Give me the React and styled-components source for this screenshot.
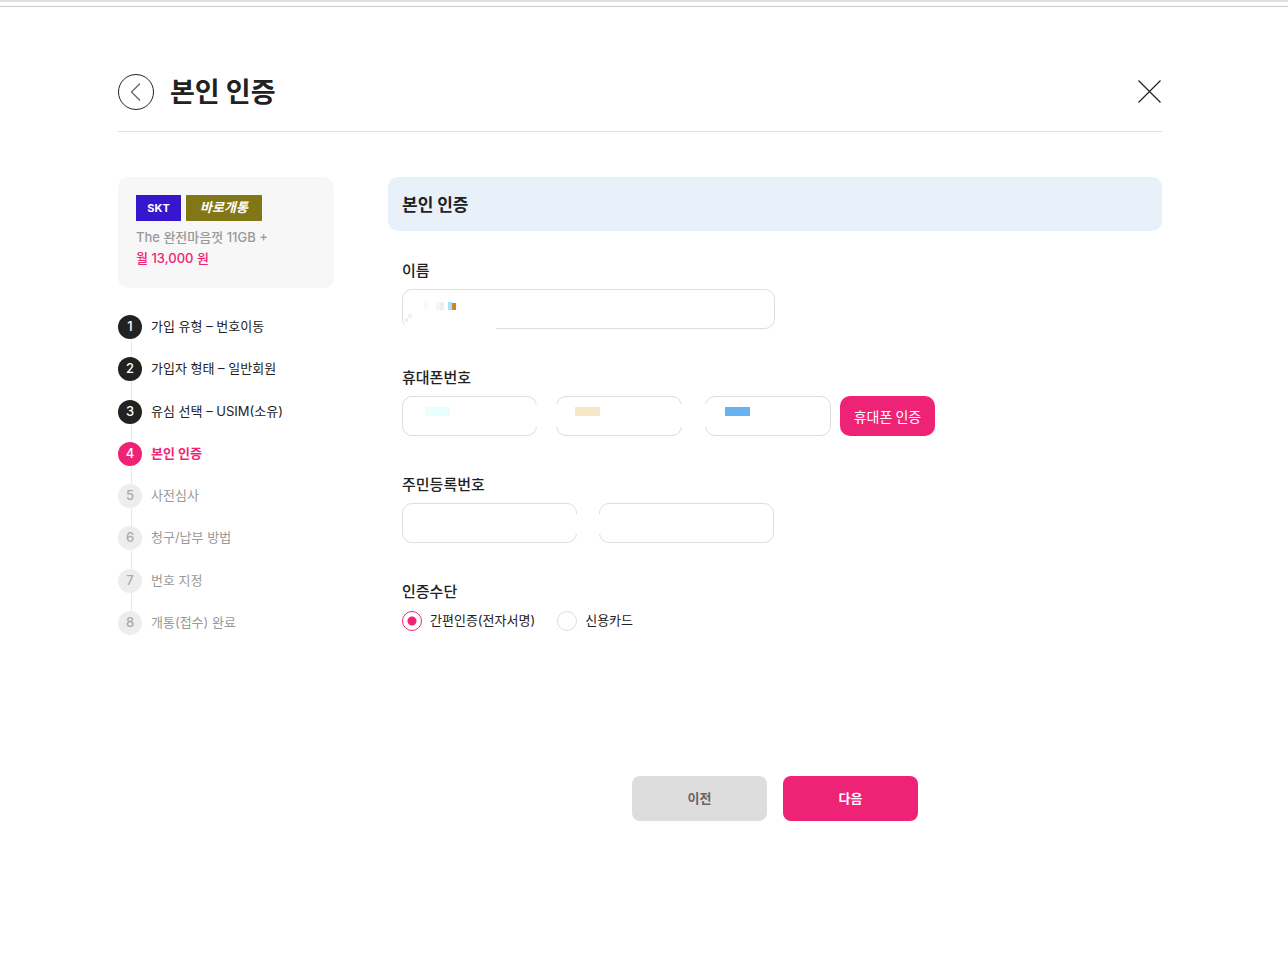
import React from "react";
import styled, { createGlobalStyle } from "styled-components";

const GlobalStyle = createGlobalStyle`
  *, *::before, *::after { box-sizing: border-box; }
  body {
    margin: 0;
    background: #fff;
    color: #222;
    font-family: Inter, "Noto Sans CJK KR", sans-serif;
    font-size: 13px;
    line-height: 20px;
  }
  h1, h2, p, ol, fieldset, legend { margin: 0; padding: 0; border: 0; }
  ol { list-style: none; }
  button, input { font: inherit; }
  button { border: 0; padding: 0; background: none; cursor: pointer; }
`;

const TopRule = styled.div`
  height: 7px;
  border-top: 2px solid #e0e0e0;
  border-bottom: 1px solid #ccc;
`;

const Page = styled.div`
  padding: 67px 126px 80px 118px;
`;

const Header = styled.header`
  display: flex;
  align-items: center;
  gap: 16px;
  padding-bottom: 21px;
  border-bottom: 1px solid #ddd;
`;

const IconButton = styled.button`
  display: flex;
  svg { display: block; }
`;

const Title = styled.h1`
  flex: 1;
  padding-bottom: 2px;
  font-family: "Noto Sans CJK KR", sans-serif;
  font-size: 27px;
  font-weight: 700;
  line-height: 34px;
`;

const Columns = styled.div`
  display: flex;
  align-items: flex-start;
  gap: 54px;
  padding-top: 45px;
`;

const Sidebar = styled.aside`
  flex: 0 0 216px;
`;

const PlanCard = styled.section`
  padding: 18px 18px 19px;
  border-radius: 10px;
  background: #f7f7f7;
`;

const Tags = styled.div`
  display: flex;
  gap: 5px;
  margin-bottom: 6px;
`;

const Tag = styled.span`
  width: ${(p) => p.$width};
  height: 26px;
  background: ${(p) => p.$color};
  color: #fff;
  font-size: ${(p) => (p.$slanted ? "13px" : "11px")};
  font-style: ${(p) => (p.$slanted ? "italic" : "normal")};
  font-weight: 700;
  line-height: ${(p) => (p.$slanted ? "24px" : "26px")};
  text-align: center;
`;

const PlanText = styled.p`
  color: ${(p) => (p.$accent ? "#ef2375" : "#999")};
  font-weight: 500;
  font-size: 13px;
  line-height: 21px;
`;

const StepList = styled.ol`
  position: relative;
  display: flex;
  flex-direction: column;
  justify-content: space-between;
  height: 320px;
  margin-top: 27px;
  &::before {
    content: "";
    position: absolute;
    z-index: -1;
    top: 12px;
    bottom: 12px;
    left: 13px;
    width: 1px;
    background: #e8e8e8;
  }
`;

const stepColors = {
  done: { bg: "#222", number: "#fff", text: "#222" },
  current: { bg: "#ef2375", number: "#fff", text: "#ef2375" },
  todo: { bg: "#ededed", number: "#aaa", text: "#999" },
};

const Step = styled.li`
  display: flex;
  align-items: flex-start;
  gap: 9px;
  line-height: 22px;
  color: ${(p) => stepColors[p.$state].text};
  font-weight: ${(p) => (p.$state === "current" ? 700 : 400)};
`;

const StepNumber = styled.span`
  width: 24px;
  height: 24px;
  border-radius: 50%;
  background: ${(p) => stepColors[p.$state].bg};
  color: ${(p) => stepColors[p.$state].number};
  font-size: 13px;
  font-weight: 500;
  text-align: center;
`;

const Main = styled.main`
  flex: 1;
  min-width: 0;
`;

const Banner = styled.h2`
  padding: 0 14px;
  border-radius: 10px;
  background: #e8f0fa;
  font-family: "Noto Sans CJK KR", sans-serif;
  font-size: 17px;
  font-weight: 700;
  line-height: 54px;
`;

const Form = styled.form`
  padding-top: 27px;
`;

const Fields = styled.div`
  display: flex;
  flex-direction: column;
  gap: 36px;
  padding: 0 14px;
`;

const Field = styled.fieldset`
  min-width: 0;
`;

const labelText = `
  display: block;
  margin-bottom: 7px;
  font-size: 15px;
  font-weight: 500;
  line-height: 24px;
  font-family: "Noto Sans CJK KR", sans-serif;
`;
const Label = styled.label`${labelText}`;
const Legend = styled.legend`${labelText}`;

const Row = styled.div`
  display: flex;
`;

const Gap = styled.span`
  flex: 0 0 ${(p) => p.$width};
`;

const InputBox = styled.div`
  position: relative;
  flex: 0 0 ${(p) => p.$width};
  width: ${(p) => p.$width};
  height: 40px;
  &::before, &::after {
    position: absolute;
    top: ${(p) => p.$cutTop || "8px"};
    width: 3px;
    height: ${(p) => p.$cutHeight || "23px"};
    background: #fff;
  }
  &::before { content: ${(p) => (p.$openLeft ? '""' : "none")}; left: 0; }
  &::after { content: ${(p) => (p.$openRight ? '""' : "none")}; right: 0; }
`;

const Input = styled.input`
  display: block;
  width: 100%;
  height: 40px;
  padding: 0 14px;
  border: 1px solid #ddd;
  border-radius: 10px;
  background: #fff;
  outline: none;
`;

const Patch = styled.span`
  position: absolute;
  left: ${(p) => p.$x}px;
  top: ${(p) => p.$y}px;
  width: ${(p) => p.$w}px;
  height: ${(p) => p.$h}px;
  background: ${(p) => p.$color};
  pointer-events: none;
`;

const VerifyButton = styled.button`
  width: 95px;
  height: 40px;
  border-radius: 10px;
  background: #ef2375;
  color: #fff;
  font-family: "Noto Sans CJK KR", sans-serif;
  font-size: 14px;
`;

const RadioRow = styled.div`
  display: flex;
  gap: 22px;
  padding-top: 1px;
`;

const RadioLabel = styled.label`
  display: flex;
  gap: 8px;
  line-height: 18px;
`;

const Radio = styled.input`
  appearance: none;
  width: 20px;
  height: 20px;
  margin: 0;
  border: 1px solid #ddd;
  border-radius: 50%;
  &:checked {
    border-color: #ef2375;
    background: radial-gradient(circle, #ef2375 4px, #fff 5px);
  }
`;

const Actions = styled.div`
  display: flex;
  justify-content: center;
  gap: 16px;
  margin-top: 145px;
`;

const ActionButton = styled.button`
  width: 135px;
  height: 45px;
  padding-bottom: 2px;
  border-radius: 8px;
  background: ${(p) => (p.$primary ? "#ef2375" : "#ddd")};
  color: ${(p) => (p.$primary ? "#fff" : "#666")};
  font-weight: 700;
`;

const steps = [
  ["가입 유형 – 번호이동", "done"],
  ["가입자 형태 – 일반회원", "done"],
  ["유심 선택 – USIM(소유)", "done"],
  ["본인 인증", "current"],
  ["사전심사", "todo"],
  ["청구/납부 방법", "todo"],
  ["번호 지정", "todo"],
  ["개통(접수) 완료", "todo"],
];

export default function App() {
  return (
    <>
      <GlobalStyle />
      <TopRule />
      <Page>
        <Header>
          <IconButton type="button" aria-label="뒤로">
            <svg width="36" height="36" viewBox="0 0 36 36" fill="none">
              <circle cx="18" cy="18" r="17.5" stroke="#222" />
              <path d="M22 9.5 L13.5 18 L22 26.5" stroke="#666" strokeWidth="1.3" />
            </svg>
          </IconButton>
          <Title>본인 인증</Title>
          <IconButton type="button" aria-label="닫기">
            <svg width="25" height="24" viewBox="0 0 25 24" fill="none">
              <path d="M1.5 0.5 L23.5 22.5 M23.5 0.5 L1.5 22.5" stroke="#222" strokeWidth="1.2" />
            </svg>
          </IconButton>
        </Header>
        <Columns>
          <Sidebar>
            <PlanCard>
              <Tags>
                <Tag $width="45px" $color="#3617ce">SKT</Tag>
                <Tag $width="76px" $color="#827717" $slanted>바로개통</Tag>
              </Tags>
              <PlanText>The 완전마음껏 11GB +</PlanText>
              <PlanText $accent>월 13,000 원</PlanText>
            </PlanCard>
            <StepList>
              {steps.map(([text, state], i) => (
                <Step key={text} $state={state} aria-current={state === "current" ? "step" : undefined}>
                  <StepNumber $state={state}>{i + 1}</StepNumber>
                  <span>{text}</span>
                </Step>
              ))}
            </StepList>
          </Sidebar>
          <Main>
            <Banner>본인 인증</Banner>
            <Form onSubmit={(e) => e.preventDefault()}>
              <Fields>
                <Field>
                  <Label htmlFor="name">이름</Label>
                  <InputBox $width="373px">
                    <Input id="name" type="text" />
                    <Patch $x={2} $y={36} $w={92} $h={4} $color="#fff" />
                    <Patch $x={3} $y={29} $w={3} $h={4} $color="#eee" />
                    <Patch $x={6} $y={25} $w={4} $h={4} $color="#f1f1f1" />
                    <Patch $x={22} $y={13} $w={4} $h={8} $color="#f8faff" />
                    <Patch $x={34} $y={13} $w={4} $h={8} $color="#fff3ee" />
                    <Patch $x={38} $y={13} $w={4} $h={8} $color="#f0ecf1" />
                    <Patch $x={46} $y={13} $w={4} $h={8} $color="#a5e1ff" />
                    <Patch $x={50} $y={14} $w={4} $h={7} $color="#d08422" />
                  </InputBox>
                </Field>
                <Field>
                  <Label htmlFor="phone1">휴대폰번호</Label>
                  <Row>
                    <InputBox $width="135px" $openRight>
                      <Input id="phone1" type="tel" />
                      <Patch $x={23} $y={11} $w={25} $h={9} $color="#e8ffff" />
                    </InputBox>
                    <Gap $width="19px" />
                    <InputBox $width="126px" $openLeft $openRight>
                      <Input type="tel" aria-label="휴대폰번호 가운데 자리" />
                      <Patch $x={19} $y={11} $w={25} $h={9} $color="#f8e7c6" />
                    </InputBox>
                    <Gap $width="23px" />
                    <InputBox $width="126px" $openLeft>
                      <Input type="tel" aria-label="휴대폰번호 끝자리" />
                      <Patch $x={20} $y={11} $w={25} $h={9} $color="#69b2f2" />
                    </InputBox>
                    <Gap $width="9px" />
                    <VerifyButton type="button">휴대폰 인증</VerifyButton>
                  </Row>
                </Field>
                <Field>
                  <Label htmlFor="rrn1">주민등록번호</Label>
                  <Row>
                    <InputBox $width="175px" $openRight $cutTop="11px" $cutHeight="20px">
                      <Input id="rrn1" type="text" />
                    </InputBox>
                    <Gap $width="22px" />
                    <InputBox $width="175px" $openLeft $cutTop="11px" $cutHeight="20px">
                      <Input type="password" aria-label="주민등록번호 뒷자리" />
                    </InputBox>
                  </Row>
                </Field>
                <Field>
                  <Legend>인증수단</Legend>
                  <RadioRow>
                    <RadioLabel>
                      <Radio type="radio" name="method" defaultChecked />
                      간편인증(전자서명)
                    </RadioLabel>
                    <RadioLabel>
                      <Radio type="radio" name="method" />
                      신용카드
                    </RadioLabel>
                  </RadioRow>
                </Field>
              </Fields>
              <Actions>
                <ActionButton type="button">이전</ActionButton>
                <ActionButton type="submit" $primary>다음</ActionButton>
              </Actions>
            </Form>
          </Main>
        </Columns>
      </Page>
    </>
  );
}
